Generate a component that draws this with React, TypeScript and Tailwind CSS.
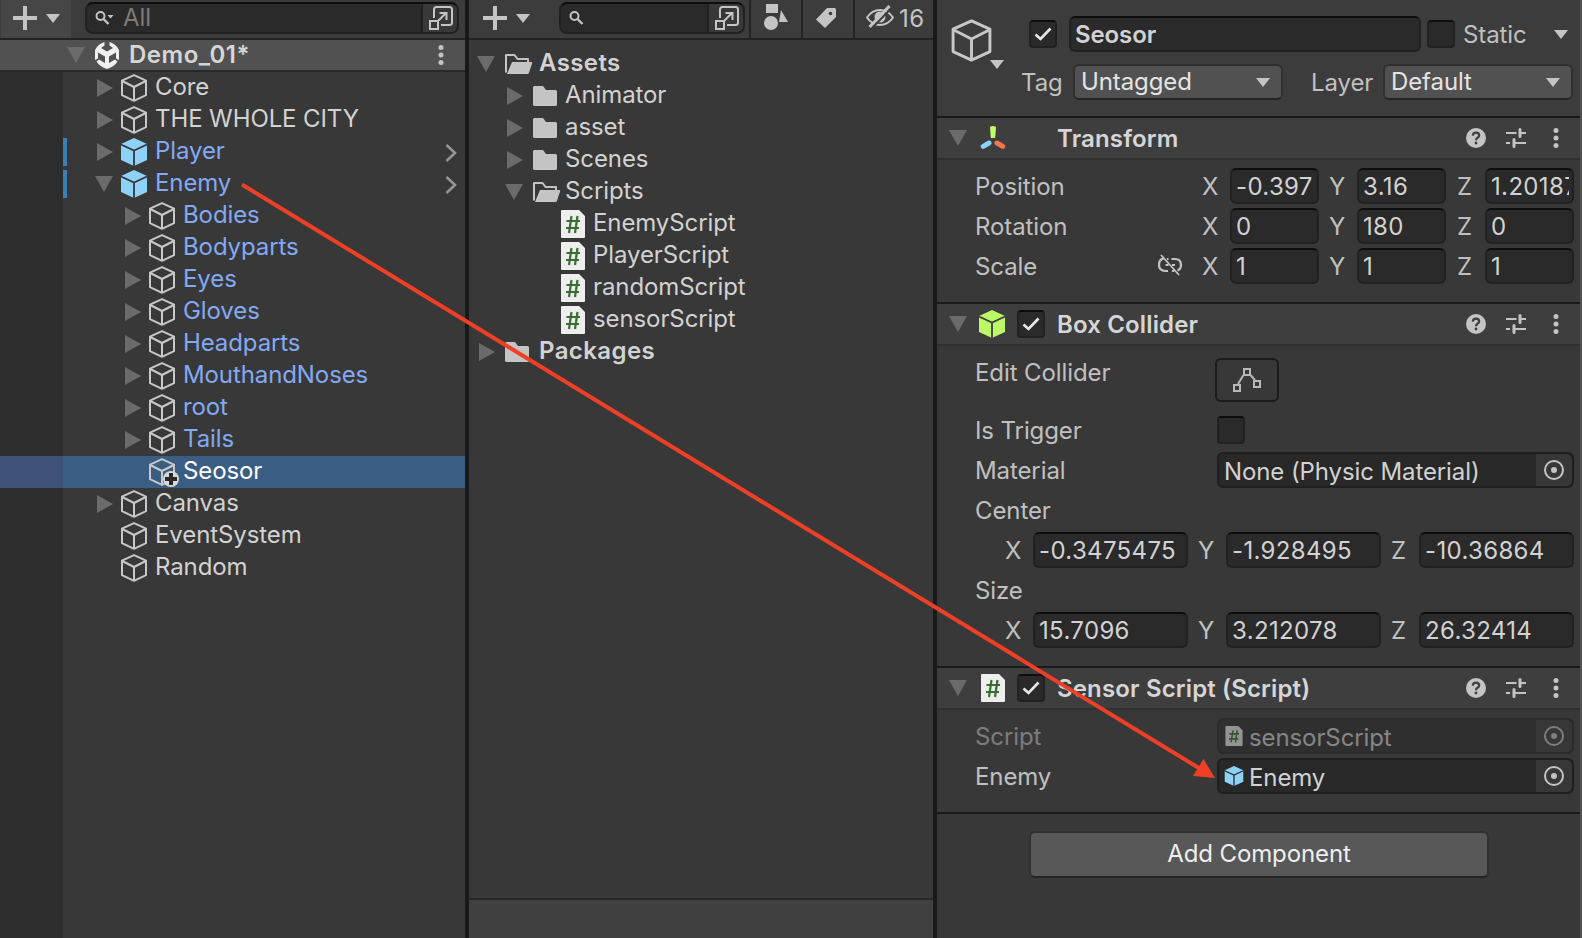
import React from 'react';

const Plus = () => (
  <svg width="24" height="24" viewBox="0 0 24 24" fill="#c4c4c4">
    <path d="M10 0h4v10h10v4H14v10h-4V14H0v-4h10z" />
  </svg>
);

const Caret = ({ className = '' }: { className?: string }) => (
  <svg width="14" height="9" viewBox="0 0 14 9" fill="#c4c4c4" className={className}>
    <path d="M0 0h14L7 9z" />
  </svg>
);

const Foldout = ({ open }: { open?: boolean }) =>
  open ? (
    <svg width="18" height="16" viewBox="0 0 18 16" fill="#6b6b6b">
      <path d="M0 0h18L9 16z" />
    </svg>
  ) : (
    <svg width="16" height="18" viewBox="0 0 16 18" fill="#6b6b6b" className="relative left-px">
      <path d="M0 0v18l16-9z" />
    </svg>
  );

const CubeOutline = ({ w = 26, h = 28, sw = 2 }: { w?: number; h?: number; sw?: number }) => (
  <svg width={w} height={h} viewBox="0 0 26 28" fill="none" stroke="#c8c8c8" strokeWidth={sw} strokeLinejoin="round">
    <path d="M13 1.2 25 6.6v14.600L13 26.8 1 21.200V6.600z" />
    <path d="M1.2 7 13 13l11.800-6M13 13v13.500" />
  </svg>
);

const CubeSolid = ({ color, gap, w = 26, h = 28 }: { color: string; gap: string; w?: number; h?: number }) => (
  <svg width={w} height={h} viewBox="0 0 26 28">
    <path d="M13 0 26 6v16l-13 6-13-6V6z" fill={color} />
    <path d="M0 6.600l13 6 13-6M13 12.600V28" fill="none" stroke={gap} strokeWidth="1.800" />
  </svg>
);

const Dots = () => (
  <svg width="6" height="20" viewBox="0 0 6 20" fill="#c4c4c4">
    <circle cx="3" cy="2.500" r="2.500" />
    <circle cx="3" cy="10" r="2.500" />
    <circle cx="3" cy="17.500" r="2.500" />
  </svg>
);

const Popout = () => (
  <svg width="24" height="24" viewBox="0 0 24 24" fill="none" stroke="#c4c4c4" strokeWidth="2" className="relative left-px">
    <path d="M5 12V3.500Q5 1 7.500 1h13Q23 1 23 3.500v13q0 2.500-2.500 2.500H12" />
    <path d="M1 15h8v8H1zM9.500 14.500 17 7M10.500 7h7v7" />
  </svg>
);

const Magnifier = ({ caret }: { caret?: boolean }) => (
  <svg width="20" height="14" viewBox="0 0 20 14" fill="none" stroke="#c4c4c4" strokeWidth="2">
    <circle cx="5.500" cy="5" r="4" />
    <path d="m8.500 8 5 5" strokeWidth="2.400" />
    {caret && <path d="M12.500 4h6L15.500 7.500z" fill="#c4c4c4" stroke="none" />}
  </svg>
);

const UnityLogo = () => (
  <svg width="24" height="27" viewBox="0 0 24 27">
    <path d="M9.500 0v3.500L6 6l6 3.500L18 6l-3.500-2.500V0Q21 2 24 8v10l-3-1.500v-6L14 14.500V21l6-3.500 2.500 2Q19 25 12 27 5 25 1.500 19.500l2.500-2 6 3.500v-6.500L3 10.500v6L0 18V8Q3 2 9.500 0z" fill="#f0f0f0" />
  </svg>
);

const FolderClosed = () => (
  <svg width="24" height="20" viewBox="0 0 24 20" fill="#c4c4c4">
    <path d="M1.500 0H10l3 4h9.500Q24 4 24 5.500v13q0 1.500-1.500 1.500h-21Q0 20 0 18.500v-17Q0 0 1.500 0z" />
  </svg>
);

const FolderOpen = () => (
  <svg width="28" height="20" viewBox="0 0 28 20" fill="#c4c4c4">
    <path d="M1 18.500V1h8.500l3 4H23v3" fill="none" stroke="#c4c4c4" strokeWidth="2" strokeLinejoin="round" />
    <path d="M7 8h19.500q1 0 .6 1.200L24 18.800q-.4 1.200-1.500 1.200H2z" />
  </svg>
);

const ScriptIcon = ({ w = 24, h = 28 }: { w?: number; h?: number }) => (
  <svg width={w} height={h} viewBox="0 0 24 28">
    <path d="M1 0h17l6 6v21q0 1-1 1H1q-1 0-1-1V1q0-1 1-1z" fill="#eeeeee" />
    <path d="M10.500 6 8 23M16.500 6 14 23M5.500 11h13.500M5 18h13" stroke="#37702e" strokeWidth="2.200" fill="none" />
  </svg>
);

const TransformIcon = () => (
  <svg width="26" height="24" viewBox="0 0 26 24" fill="none" strokeWidth="5" strokeLinecap="round">
    <path d="M10 1.500Q10 0 13 0t3 1.500L15.200 12h-4.400z" fill="#c1f967" />
    <path d="M3.200 20.300 9 17" stroke="#8ed2fa" />
    <path d="M22.800 20.300 17 17" stroke="#f37848" />
  </svg>
);

const Help = () => (
  <svg width="20" height="20" viewBox="0 0 20 20">
    <circle cx="10" cy="10" r="10" fill="#c4c4c4" />
    <path d="M6.800 7.600Q7 4.600 10 4.600t3.200 2.700q0 1.500-1.700 2.500Q10 10.700 10 12.200" fill="none" stroke="#3e3e3e" strokeWidth="2.200" />
    <circle cx="10" cy="15" r="1.400" fill="#3e3e3e" />
  </svg>
);

const Preset = () => (
  <svg width="20" height="20" viewBox="0 0 20 20" fill="none" stroke="#c4c4c4" strokeWidth="2">
    <path d="M0 5h10.500M14 5h6M0 15h4M8 15h12" />
    <path d="M14 1.500v7M8 11.500v7" strokeWidth="3" strokeLinecap="round" />
  </svg>
);

const Check = () => (
  <svg width="18" height="16" viewBox="0 0 18 16" fill="none" stroke="#e8e8e8" strokeWidth="2.600">
    <path d="m1.500 8.500 5 4.500L16.500 2.500" />
  </svg>
);

const Checkbox = ({ checked }: { checked?: boolean }) => (
  <div className="flex h-7 w-7 shrink-0 items-center justify-center rounded border-2 border-[#212121] border-t-[#0d0d0d] bg-[#2a2a2a]">
    {checked && <Check />}
  </div>
);

type Row = {
  name: string;
  level: number;
  fold?: 'open' | 'closed';
  prefab?: boolean;
  blue?: boolean;
  selected?: boolean;
};

const hierarchy: Row[] = [
  { name: 'Core', level: 0, fold: 'closed' },
  { name: 'THE WHOLE CITY', level: 0, fold: 'closed' },
  { name: 'Player', level: 0, fold: 'closed', prefab: true, blue: true },
  { name: 'Enemy', level: 0, fold: 'open', prefab: true, blue: true },
  { name: 'Bodies', level: 1, fold: 'closed', blue: true },
  { name: 'Bodyparts', level: 1, fold: 'closed', blue: true },
  { name: 'Eyes', level: 1, fold: 'closed', blue: true },
  { name: 'Gloves', level: 1, fold: 'closed', blue: true },
  { name: 'Headparts', level: 1, fold: 'closed', blue: true },
  { name: 'MouthandNoses', level: 1, fold: 'closed', blue: true },
  { name: 'root', level: 1, fold: 'closed', blue: true },
  { name: 'Tails', level: 1, fold: 'closed', blue: true },
  { name: 'Seosor', level: 1, selected: true },
  { name: 'Canvas', level: 0, fold: 'closed' },
  { name: 'EventSystem', level: 0 },
  { name: 'Random', level: 0 },
];

const HierarchyRow = ({ row }: { row: Row }) => {
  const color = row.selected ? 'text-white' : row.blue ? 'text-[#83a9f5]' : 'text-[#d2d2d2]';
  return (
    <div className="flex h-8">
      <div className={`w-[63px] shrink-0 ${row.selected ? 'bg-[#3d5179]' : 'bg-[#2d2d2d]'}`} />
      <div className={`flex flex-1 items-center ${row.selected ? 'bg-[#3a5d84]' : ''}`}>
        <div className={`h-7 w-1 shrink-0 ${row.prefab ? 'bg-[#3a7fb8]' : ''}`} />
        <div className={`flex w-[54px] shrink-0 justify-center pl-[20px] ${row.level ? 'ml-7' : ''}`}>
          {row.fold && <Foldout open={row.fold === 'open'} />}
        </div>
        <div className="relative shrink-0">
          {row.prefab ? <CubeSolid color="#8ed2fa" gap="#383838" /> : <CubeOutline />}
          {row.selected && (
            <svg width="16" height="16" viewBox="0 0 16 16" className="absolute top-[13px] left-[14px]">
              <circle cx="8" cy="8" r="8" fill="#d8d8d8" />
              <path d="M6 2h4v4h4v4h-4v4H6v-4H2V6h4z" fill="#2a2a2a" />
            </svg>
          )}
        </div>
        <span className={`ml-2 self-start leading-[30px] whitespace-nowrap ${color}`}>{row.name}</span>
        {row.prefab && (
          <svg width="12" height="18" viewBox="0 0 12 18" fill="none" stroke="#959595" strokeWidth="2.600" className="mt-[2px] mr-[8px] ml-auto">
            <path d="m1.500 1 8.500 8-8.500 8" />
          </svg>
        )}
      </div>
    </div>
  );
};

const HierarchyPanel = () => (
  <div className="flex w-[465px] shrink-0 flex-col bg-[#383838]">
    <div className="flex h-10 shrink-0 border-b-2 border-[#232323] bg-[#3c3c3c]">
      <div className="ml-px flex w-[70px] items-center gap-[9px] bg-[#464646] pb-[2px] pl-3">
        <Plus />
        <Caret />
      </div>
      <div className="mt-[2px] ml-[14px] flex h-8 w-[374px] rounded-lg border-2 border-[#212121] border-t-[#0d0d0d] bg-[#2a2a2a]">
        <div className="flex flex-1 items-center pl-2">
          <Magnifier caret />
          <span className="ml-2 leading-[30px] text-[#7b7b7b]">All</span>
        </div>
        <div className="flex w-[36px] items-center justify-center rounded-r-md border-l-2 border-[#212121] bg-[#383838]">
          <Popout />
        </div>
      </div>
    </div>
    <div className="flex h-8 shrink-0 items-center border-b-2 border-[#292929] bg-[#515151] pl-[67px]">
      <Foldout open />
      <div className="ml-[10px]">
        <UnityLogo />
      </div>
      <span className="ml-[9px] self-start pl-px leading-[30px] font-semibold tracking-[0.5px] text-[#d6d6d6]">Demo_01*</span>
      <div className="mr-[21px] ml-auto">
        <Dots />
      </div>
    </div>
    <div>
      {hierarchy.map((row) => (
        <HierarchyRow key={row.name} row={row} />
      ))}
    </div>
    <div className="w-[63px] flex-1 bg-[#2d2d2d]" />
  </div>
);

const Folder = ({ name, open, root }: { name: string; open?: boolean; root?: boolean }) => (
  <div className={`flex h-8 items-center ${root ? 'pl-[7px]' : 'pl-[35px]'}`}>
    <div className="flex w-[20px] justify-center">
      <Foldout open={open} />
    </div>
    <div className="ml-[9px] w-[28px]">{open ? <FolderOpen /> : <FolderClosed />}</div>
    <span className={`self-start leading-[30px] ${root ? 'ml-[6px] font-semibold tracking-[0.4px]' : 'ml-1'}`}>{name}</span>
  </div>
);

const scripts = ['EnemyScript', 'PlayerScript', 'randomScript', 'sensorScript'];

const ProjectPanel = () => (
  <div className="flex w-[464px] shrink-0 flex-col bg-[#383838] text-[#d2d2d2]">
    <div className="flex h-10 shrink-0 border-b-2 border-[#232323] bg-[#3c3c3c]">
      <div className="flex w-[90px] items-center gap-[9px] pb-[2px] pl-[14px]">
        <Plus />
        <Caret />
      </div>
      <div className="mt-[2px] flex h-8 w-[186px] rounded-lg border-2 border-[#212121] border-t-[#0d0d0d] bg-[#2a2a2a]">
        <div className="flex flex-1 items-center pl-2">
          <Magnifier />
        </div>
        <div className="flex w-[36px] items-center justify-center rounded-r-md border-l-2 border-[#212121] bg-[#383838]">
          <Popout />
        </div>
      </div>
      <div className="ml-[4px] flex w-[52px] items-center justify-center border-l-2 border-[#232323] pb-1">
        <svg width="24" height="26" viewBox="0 0 24 26" fill="#c4c4c4">
          <path d="M2 0h12v9H2zM17 6l7 12h-9z" />
          <circle cx="7" cy="19" r="8" fill="#3c3c3c" />
          <circle cx="7" cy="19" r="7" />
        </svg>
      </div>
      <div className="flex w-[52px] items-center justify-center border-l-2 border-[#232323] pr-[4px] pb-[2px]">
        <svg width="20" height="20" viewBox="0 0 20 20">
          <path d="M11 0h7.500Q20 0 20 1.500V9L9 20 0 11.500z" fill="#c4c4c4" />
          <circle cx="14.500" cy="5.500" r="1.800" fill="#3c3c3c" />
        </svg>
      </div>
      <div className="flex flex-1 items-center border-l-2 border-[#232323] pl-[11px]">
        <svg width="28" height="24" viewBox="0 0 28 24" fill="none" stroke="#c4c4c4" strokeWidth="2" className="mb-[4px]">
          <path d="M1 12.500Q6 5 14 5t13 7.500Q22 20 14 20T1 12.500z" />
          <circle cx="14" cy="12" r="4.500" fill="#c4c4c4" />
          <path d="M5.500 23.500 26 2.500" stroke="#3c3c3c" strokeWidth="2" />
          <path d="M3.500 22 23.500 1" strokeWidth="3" />
        </svg>
        <span className="ml-1 self-start pl-px leading-[37px] tracking-[0.4px] text-[#c4c4c4]">16</span>
      </div>
    </div>
    <div className="flex-1 pt-2">
      <Folder name="Assets" open root />
      <Folder name="Animator" />
      <Folder name="asset" />
      <Folder name="Scenes" />
      <Folder name="Scripts" open />
      {scripts.map((name) => (
        <div key={name} className="flex h-8 items-center pl-[92px]">
          <ScriptIcon />
          <span className="ml-2 self-start leading-[30px]">{name}</span>
        </div>
      ))}
      <Folder name="Packages" root />
    </div>
    <div className="h-10 shrink-0 border-t-2 border-[#292929] bg-[#404040]" />
  </div>
);

const Dropdown = ({ value, className }: { value: string; className: string }) => (
  <div className={`flex h-9 items-center justify-between rounded-md border-2 border-[#303030] border-b-[#242424] bg-[#515151] pr-[11px] pl-[6px] text-[#e4e4e4] ${className}`}>
    <span className="leading-8">{value}</span>
    <Caret />
  </div>
);

const Field = ({ value, className = 'tracking-[0.35px]' }: { value: string; className?: string }) => (
  <div className={`h-9 overflow-hidden rounded-md border-2 border-[#212121] border-t-[#0d0d0d] bg-[#2a2a2a] pr-[3px] pl-[4px] leading-[34px] text-[#d2d2d2] ${className}`}>
    <div className="overflow-hidden whitespace-nowrap">{value}</div>
  </div>
);

const ComponentHeader = ({ title, icon, toggle }: { title: string; icon: React.ReactNode; toggle?: boolean }) => (
  <div className="flex h-[44px] shrink-0 items-center border-t-2 border-b-2 border-t-[#1a1a1a] border-b-[#303030] bg-[#3e3e3e] pl-3">
    <Foldout open />
    <div className="ml-[11px] flex w-[28px] justify-center">{icon}</div>
    <div className="ml-[11px] w-[28px]">{toggle && <Checkbox checked />}</div>
    <span className="ml-[12px] pt-[2px] font-semibold tracking-[0.15px] text-[#d6d6d6]">{title}</span>
    <div className="mr-[21px] ml-auto flex items-center gap-5 pb-px">
      <Help />
      <Preset />
      <div className="ml-[7px]">
        <Dots />
      </div>
    </div>
  </div>
);

const VectorRow = ({ label, values, linked }: { label: string; values: string[]; linked?: boolean }) => (
  <div className="flex h-9">
    <span className="w-[182px] leading-[37px]">{label}</span>
    <div className="flex w-[45px] items-center">
      {linked && (
        <svg width="26" height="22" viewBox="0 0 26 22" fill="none" stroke="#c4c4c4" strokeWidth="2.200" className="mb-[3px]">
          <path d="M6.500 4.700Q2 5.500 2 11t6.500 6H11M10 5h1.500M14.500 5H18q6 0 6 6 0 4-3.500 5.500M15 17h2M8.500 11h3M15 11h3" />
          <path d="m4 1 18 20" strokeWidth="1.800" />
        </svg>
      )}
    </div>
    <div className="grid flex-1 grid-cols-[28px_89px_38px_89px_39px_89px] leading-[37px]">
      <span>X</span>
      <Field value={values[0]} />
      <span className="pl-[10px]">Y</span>
      <Field value={values[1]} />
      <span className="pl-[11px]">Z</span>
      <Field value={values[2]} />
    </div>
  </div>
);

const WideVectorRow = ({ values }: { values: string[] }) => (
  <div className="grid h-9 grid-cols-[58px_155px_38px_155px_38px_155px] leading-[37px]">
    <span className="pl-[30px]">X</span>
    <Field value={values[0]} />
    <span className="pl-[10px]">Y</span>
    <Field value={values[1]} />
    <span className="pl-[10px]">Z</span>
    <Field value={values[2]} />
  </div>
);

const ObjectField = ({ value, icon }: { value: string; icon?: React.ReactNode }) => (
  <div className="flex h-9 w-[357px] rounded-md border-2 border-[#1f1f1f] bg-[#282828] text-[#d2d2d2]">
    <div className="flex flex-1 items-center gap-[5px] pl-[5px]">
      {icon}
      <span className="pt-[3px] leading-8">{value}</span>
    </div>
    <div className="flex w-[36px] items-center justify-center rounded-r-md bg-[#373737]">
      <svg width="22" height="22" viewBox="0 0 22 22">
        <circle cx="11" cy="11" r="9" fill="none" stroke="#c4c4c4" strokeWidth="2" />
        <circle cx="11" cy="11" r="3" fill="#c4c4c4" />
      </svg>
    </div>
  </div>
);

const InspectorPanel = () => (
  <div className="flex flex-1 flex-col bg-[#383838] text-[#c0c0c0]">
    <div className="flex h-[116px] shrink-0 bg-[#3c3c3c] pt-4">
      <div className="relative w-[84px] pt-[3px] pl-[14px]">
        <CubeOutline w={41} h={43} sw={1.900} />
        <Caret className="absolute top-11 left-[53px]" />
      </div>
      <div className="flex flex-col gap-3">
        <div className="flex h-9 items-center">
          <div className="ml-2">
            <Checkbox checked />
          </div>
          <Field value="Seosor" className="ml-3 w-[352px] font-semibold" />
          <div className="ml-[6px]">
            <Checkbox />
          </div>
          <span className="ml-2 leading-[39px]">Static</span>
          <Caret className="mr-[5px] ml-auto" />
        </div>
        <div className="flex h-9">
          <span className="w-[52px] leading-[37px]">Tag</span>
          <Dropdown value="Untagged" className="w-[210px]" />
          <span className="ml-[28px] w-[72px] leading-[37px]">Layer</span>
          <Dropdown value="Default" className="w-[190px]" />
        </div>
      </div>
    </div>

    <ComponentHeader title="Transform" icon={<div className="pl-[2px]"><TransformIcon /></div>} />
    <div className="flex h-[142px] shrink-0 flex-col gap-1 pt-2 pl-[38px]">
      <VectorRow label="Position" values={['-0.397', '3.16', '1.20187']} />
      <VectorRow label="Rotation" values={['0', '180', '0']} />
      <VectorRow label="Scale" values={['1', '1', '1']} linked />
    </div>

    <ComponentHeader title="Box Collider" icon={<CubeSolid color="#bdf966" gap="#3e3e3e" />} toggle />
    <div className="flex h-[320px] shrink-0 flex-col gap-1 pt-3 pl-[38px]">
      <div className="flex h-[50px]">
        <span className="w-[240px] leading-[30px]">Edit Collider</span>
        <div className="flex h-11 w-16 items-center justify-center rounded-md border-2 border-[#1c1c1c] bg-[#383838]">
          <svg width="28" height="24" viewBox="0 0 28 24" fill="none" stroke="#b8b8b8" strokeWidth="2">
            <path d="M11 1h6v6h-6zM1 17h6v6H1zM21 13h6v6h-6z" />
            <path d="M10.500 7 5 16M17.500 7 22 12" />
          </svg>
        </div>
      </div>
      <div className="flex h-9 items-center">
        <span className="w-[242px] leading-[35px]">Is Trigger</span>
        <Checkbox />
      </div>
      <div className="flex h-9">
        <span className="w-[242px] leading-[37px]">Material</span>
        <ObjectField value="None (Physic Material)" />
      </div>
      <div className="h-9 leading-[37px]">Center</div>
      <WideVectorRow values={['-0.3475475', '-1.928495', '-10.36864']} />
      <div className="h-9 leading-[37px]">Size</div>
      <WideVectorRow values={['15.7096', '3.212078', '26.32414']} />
    </div>

    <ComponentHeader title="Sensor Script (Script)" icon={<div className="pl-[2px]"><ScriptIcon /></div>} toggle />
    <div className="flex h-[102px] shrink-0 flex-col gap-1 pt-2 pl-[38px]">
      <div className="flex h-9 opacity-50">
        <span className="w-[242px] leading-[37px]">Script</span>
        <ObjectField value="sensorScript" icon={<ScriptIcon w={20} h={20} />} />
      </div>
      <div className="flex h-9">
        <span className="w-[242px] leading-[37px]">Enemy</span>
        <ObjectField value="Enemy" icon={<CubeSolid color="#8ed2fa" gap="#282828" w={20} h={20} />} />
      </div>
    </div>

    <div className="border-t-2 border-[#1a1a1a] pt-[17px] pl-[92px]">
      <button className="h-[47px] w-[460px] rounded-md border-2 border-[#303030] border-b-[#242424] bg-[#585858] pb-px text-[#eeeeee]">
        Add Component
      </button>
    </div>
  </div>
);

const App: React.FC = () => {
  return (
    <div className="relative flex h-[938px] w-[1582px] overflow-hidden bg-[#191919] font-['Inter',sans-serif] text-[24px] tracking-[-0.1px]">
      <HierarchyPanel />
      <div className="w-1 shrink-0" />
      <ProjectPanel />
      <div className="w-1 shrink-0" />
      <InspectorPanel />
      <div className="w-[2px] shrink-0 bg-[#525252]" />
      {/* arrow from the Enemy object to the script's Enemy slot */}
      <svg width="1582" height="938" viewBox="0 0 1582 938" className="pointer-events-none absolute inset-0">
        <path d="M242 184.500 1203 770.500" stroke="#ee4026" strokeWidth="4" />
        <path d="m1215 778-11.500-19-10.500 17z" fill="#ee4026" />
      </svg>
    </div>
  );
};

export default App;
